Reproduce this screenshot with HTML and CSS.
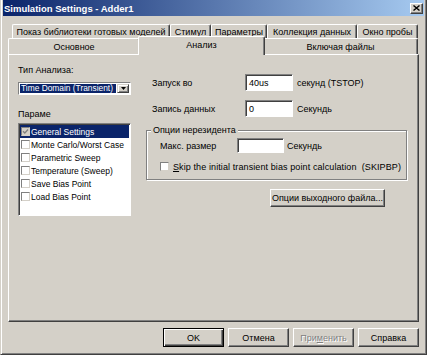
FILE: index.html
```html
<!DOCTYPE html>
<html>
<head>
  <title>Simulation Settings - Adder1</title>
  <link rel="stylesheet" href="styles.css">
</head>
<body>
  <div class="window">
    <div class="titlebar">
      <span class="title">Simulation Settings - Adder1</span>
      <span class="close-btn">
        <svg viewBox="0 0 7 6" width="7" height="6">
          <path d="M0.5 0.5L6.5 5.5M6.5 0.5L0.5 5.5" stroke="#000" stroke-width="1.4"/>
        </svg>
      </span>
    </div>

    <!-- tab strip, two rows -->
    <div class="tabs">
      <div class="tab-row back">
        <div class="tab tab-lib">Показ библиотеки готовых моделей</div>
        <div class="tab tab-stim">Стимул</div>
        <div class="tab tab-param">Параметры</div>
        <div class="tab tab-data">Коллекция данных</div>
        <div class="tab tab-probe">Окно пробы</div>
      </div>
      <div class="tab-row front">
        <div class="tab tab-main">Основное</div>
        <div class="tab tab-analysis active">Анализ</div>
        <div class="tab tab-files">Включая файлы</div>
      </div>
    </div>

    <div class="panel">
      <div class="col-left">
        <div class="caption">Тип Анализа:</div>
        <div class="combo">
          <span class="combo-value"><span class="combo-sel">Time Domain (Transient)</span></span>
          <span class="combo-btn">
            <svg viewBox="0 0 5 3" width="5" height="3"><path d="M0 0h5L2.5 3z" fill="#000"/></svg>
          </span>
        </div>
        <div class="caption caption-list">Параме</div>
        <div class="listbox">
          <div class="list-item selected"><span class="cb checked"><svg viewBox="0 0 7 7" width="7" height="7"><path d="M1 3.2L2.8 5L6 1.5" stroke="#808080" stroke-width="1.3" fill="none"/></svg></span>General Settings</div>
          <div class="list-item"><span class="cb"></span>Monte Carlo/Worst Case</div>
          <div class="list-item"><span class="cb"></span>Parametric Sweep</div>
          <div class="list-item"><span class="cb"></span>Temperature (Sweep)</div>
          <div class="list-item"><span class="cb"></span>Save Bias Point</div>
          <div class="list-item"><span class="cb"></span>Load Bias Point</div>
        </div>
      </div>

      <div class="col-right">
        <div class="field-row first">
          <span class="field-label">Запуск во</span>
          <span class="textbox">40us</span>
          <span class="unit">секунд (TSTOP)</span>
        </div>
        <div class="field-row">
          <span class="field-label">Запись данных</span>
          <span class="textbox">0</span>
          <span class="unit">Секундь</span>
        </div>

        <div class="group">
          <div class="group-title">Опции нерезидента</div>
          <div class="group-row">
            <span class="group-label">Макс. размер</span>
            <span class="textbox small"></span>
            <span class="unit">Секундь</span>
          </div>
          <div class="check-row">
            <span class="cb"></span>
            <span class="check-text"><u>S</u>kip the initial transient bias point calculation&nbsp; (SKIPBP)</span>
          </div>
        </div>

        <button class="btn btn-output">Опции выходного файла...</button>
      </div>
    </div>

    <div class="footer">
      <button class="btn btn-default">OK</button>
      <button class="btn">Отмена</button>
      <button class="btn disabled">При<u>м</u>енить</button>
      <button class="btn">Справка</button>
    </div>
  </div>
</body>
</html>
```

FILE: styles.css
```css
:root {
  --face: #d4d0c8;
  --light: #ffffff;
  --shadow: #808080;
  --dark: #404040;
  --select: #0a246a;
  --ui-font: "Liberation Sans", Arial, sans-serif;
}

html, body {
  margin: 0;
  padding: 0;
  overflow: hidden;
}

body {
  background: var(--face);
  font-family: var(--ui-font);
  font-size: 9px;
  color: #000;
}

.window {
  width: 427px;
  height: 355px;
  box-sizing: border-box;
  padding: 0 2px 2px;
  border: 1px solid;
  border-top: 0;
  border-color: var(--face) var(--dark) var(--dark) var(--face);
  box-shadow: inset 1px 0 var(--light), inset -1px -1px var(--shadow);
  display: flex;
  flex-direction: column;
}

/* title bar */
.titlebar {
  height: 16px;
  flex: none;
  display: flex;
  align-items: center;
  justify-content: space-between;
  padding: 0 1px 0 1px;
  background: linear-gradient(90deg, #0a246a, #a6caf0);
  color: #fff;
  font-weight: bold;
  font-size: 9.5px;
}

.close-btn {
  width: 13px;
  height: 11px;
  box-sizing: border-box;
  background: var(--face);
  border: 1px solid;
  border-color: var(--light) var(--dark) var(--dark) var(--light);
  box-shadow: inset -1px -1px var(--shadow);
  display: flex;
  align-items: center;
  justify-content: center;
}

/* tabs */
.tabs {
  margin: 8px 6px 0 5px;
}

.tab-row {
  display: flex;
}

.tab-row.back {
  margin-left: 4px;
  height: 14px;
}

.tab-row.front {
  height: 16px;
}

.tab {
  box-sizing: border-box;
  flex: none;
  border-top: 1px solid var(--light);
  border-left: 1px solid var(--light);
  border-right: 1px solid var(--dark);
  box-shadow: inset -1px 0 var(--shadow);
  border-radius: 2px 2px 0 0;
  display: flex;
  align-items: center;
  justify-content: center;
  white-space: nowrap;
  background: var(--face);
}

.tab-lib { width: 158px; }
.tab-stim { width: 41px; }
.tab-param { width: 56px; }
.tab-data { width: 90px; }
.tab-probe { width: 61px; }

.tab-main { width: 132px; }
.tab-analysis { width: 123px; }
.tab-files { width: 155px; }

.tab.active {
  width: 127px;
  height: 19px;
  margin: -2px -2px -1px;
  padding-bottom: 3px;
  position: relative;
  z-index: 1;
}

/* page panel */
.panel {
  flex: none;
  height: 268px;
  margin: 0 5px;
  box-sizing: border-box;
  border: 1px solid;
  border-color: var(--light) var(--dark) var(--dark) var(--light);
  box-shadow: inset -1px -1px var(--shadow);
  display: flex;
  gap: 14px;
  padding: 9px 0 0 9px;
}

.col-left {
  width: 114px;
  flex: none;
}

.caption {
  line-height: 12px;
}

.caption-list {
  margin-top: 13px;
}

.combo {
  margin-top: 6px;
  width: 113px;
  height: 13px;
  box-sizing: border-box;
  background: #fff;
  border: 1px solid;
  border-color: var(--shadow) var(--light) var(--light) var(--shadow);
  display: flex;
  align-items: stretch;
  padding: 1px;
}

.combo-value {
  flex: 1;
  display: flex;
  padding-right: 1px;
}

.combo-sel {
  flex: 1;
  background: var(--select);
  color: #fff;
  font-size: 8.4px;
  line-height: 9px;
  padding-left: 1px;
  white-space: nowrap;
  overflow: hidden;
}

.combo-btn {
  width: 12px;
  box-sizing: border-box;
  background: var(--face);
  border: 1px solid;
  border-color: var(--face) var(--dark) var(--dark) var(--face);
  box-shadow: inset 1px 1px var(--light), inset -1px -1px var(--shadow);
  display: flex;
  align-items: center;
  justify-content: center;
}

.listbox {
  margin-top: 3px;
  width: 113px;
  height: 93px;
  box-sizing: border-box;
  background: #fff;
  border: 1px solid;
  border-color: var(--shadow) var(--light) var(--light) var(--shadow);
  box-shadow: inset 1px 1px var(--dark);
  padding: 1px 1px 0 1px;
  font-size: 8.5px;
}

.list-item {
  height: 13px;
  display: flex;
  align-items: center;
  gap: 1px;
  padding-left: 1px;
  white-space: nowrap;
}

.list-item.selected {
  background: var(--select);
  color: #fff;
}

.cb {
  width: 9px;
  height: 9px;
  flex: none;
  box-sizing: border-box;
  background: #fff;
  border: 1px solid;
  border-color: var(--shadow) var(--face) var(--face) var(--shadow);
  display: flex;
  align-items: center;
  justify-content: center;
}

.cb.checked {
  background: var(--face);
}

/* right column */
.col-right {
  flex: none;
  width: 262px;
  padding-top: 10px;
}

.field-row {
  display: flex;
  align-items: center;
  height: 17px;
  padding-left: 6px;
  margin-top: 9px;
}

.field-row.first {
  margin-top: 0;
}

.field-label {
  width: 93px;
}

.textbox {
  width: 48px;
  height: 17px;
  box-sizing: border-box;
  background: #fff;
  border: 1px solid;
  border-color: var(--shadow) var(--light) var(--light) var(--shadow);
  box-shadow: inset 1px 1px var(--dark);
  padding-left: 3px;
  display: flex;
  align-items: center;
}

.textbox.small {
  width: 47px;
  height: 15px;
}

.unit {
  margin-left: 4px;
}

.group {
  margin-top: 13px;
  width: 261px;
  height: 50px;
  box-sizing: border-box;
  border: 1px solid var(--shadow);
  box-shadow: inset 1px 1px var(--light), 1px 1px var(--light);
}

.group-title {
  margin: -6px 0 0 4px;
  padding: 0 2px;
  width: max-content;
  line-height: 11px;
  background: var(--face);
}

.group-row {
  display: flex;
  align-items: center;
  margin-top: 2px;
  padding-left: 13px;
}

.group-label {
  width: 77px;
}

.group-row .unit {
  margin-left: 3px;
}

.check-row {
  display: flex;
  align-items: center;
  gap: 4px;
  height: 11px;
  margin-top: 8px;
  padding-left: 13px;
}

.check-text {
  letter-spacing: 0.1px;
}

/* buttons */
.btn {
  font-family: var(--ui-font);
  font-size: 9px;
  color: #000;
  background: var(--face);
  box-sizing: border-box;
  border: 1px solid;
  border-color: var(--light) var(--dark) var(--dark) var(--light);
  box-shadow: inset -1px -1px var(--shadow);
  padding: 0;
  margin: 0;
  width: 61px;
  height: 19px;
  display: flex;
  align-items: center;
  justify-content: center;
}

.btn-output {
  margin: 9px 0 0 124px;
  width: 115px;
  height: 18px;
}

.btn-default {
  border: 1px solid #000;
  box-shadow: inset 1px 1px var(--light), inset -1px -1px var(--dark), inset -2px -2px var(--shadow);
}

.btn.disabled {
  color: var(--shadow);
  text-shadow: 1px 1px var(--light);
}

.footer {
  display: flex;
  justify-content: flex-end;
  gap: 4px;
  margin: 6px 5px 0 0;
}
```
